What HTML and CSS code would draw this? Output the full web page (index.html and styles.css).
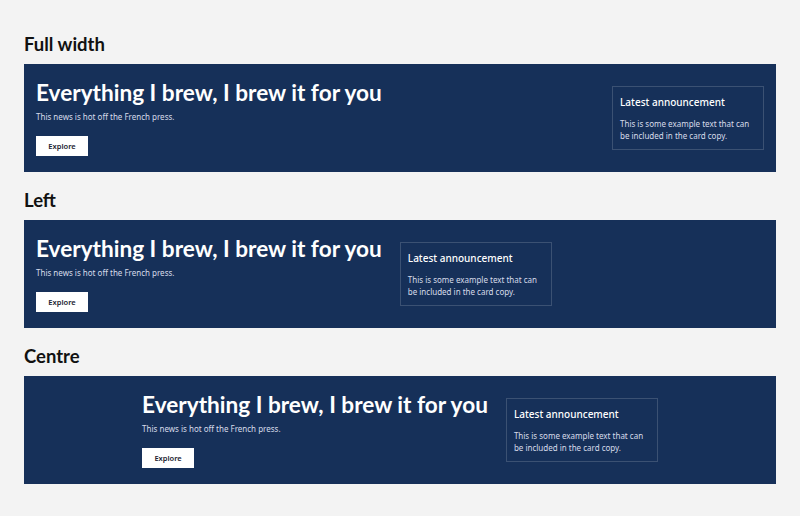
FILE: index.html
```html
<!DOCTYPE html>
<html lang="en">
<head>
<meta charset="utf-8">
<title>Hero banners</title>
<link rel="stylesheet" href="styles.css">
</head>
<body>
<main class="page">
  <section class="demo">
    <h2 class="demo-title">Full width</h2>
    <div class="hero hero-full">
      <div class="hero-main">
        <h1 class="hero-heading">Everything I brew, I brew it for you</h1>
        <p class="hero-sub">This news is hot off the French press.</p>
        <a class="hero-btn" href="#">Explore</a>
      </div>
      <div class="hero-card">
        <h3 class="card-title">Latest announcement</h3>
        <p class="card-text">This is some example text that can be included in the card copy.</p>
      </div>
    </div>
  </section>
  <section class="demo">
    <h2 class="demo-title">Left</h2>
    <div class="hero hero-left">
      <div class="hero-main">
        <h1 class="hero-heading">Everything I brew, I brew it for you</h1>
        <p class="hero-sub">This news is hot off the French press.</p>
        <a class="hero-btn" href="#">Explore</a>
      </div>
      <div class="hero-card">
        <h3 class="card-title">Latest announcement</h3>
        <p class="card-text">This is some example text that can be included in the card copy.</p>
      </div>
    </div>
  </section>
  <section class="demo">
    <h2 class="demo-title">Centre</h2>
    <div class="hero hero-centre">
      <div class="hero-main">
        <h1 class="hero-heading">Everything I brew, I brew it for you</h1>
        <p class="hero-sub">This news is hot off the French press.</p>
        <a class="hero-btn" href="#">Explore</a>
      </div>
      <div class="hero-card">
        <h3 class="card-title">Latest announcement</h3>
        <p class="card-text">This is some example text that can be included in the card copy.</p>
      </div>
    </div>
  </section>
</main>
</body>
</html>
```

FILE: styles.css
```css
html, body {
  margin: 0;
  padding: 0;
  background: #f3f3f3;
}
body {
  font-family: "Noto Sans", "Open Sans", sans-serif;
  color: #111;
}
.page {
  padding: 32px 24px 0;
  display: flex;
  flex-direction: column;
  gap: 16px;
}
.demo {
  display: flex;
  flex-direction: column;
  gap: 8px;
}
.demo-title {
  margin: 0;
  font-family: Lato, "Noto Sans", sans-serif;
  font-weight: 700;
  font-size: 18.5px;
  line-height: 24px;
  color: #111;
}
.hero {
  background: #163059;
  height: 108px;
  box-sizing: border-box;
  padding: 0 12px;
  display: flex;
  align-items: center;
  gap: 18px;
}
.hero-full { justify-content: space-between; }
.hero-left { justify-content: flex-start; }
.hero-centre { justify-content: center; }
.hero-main {
  display: flex;
  flex-direction: column;
  align-items: flex-start;
}
.hero-heading {
  margin: 0;
  font-family: Lato, "Noto Sans", sans-serif;
  font-weight: 700;
  font-size: 22.6px;
  line-height: 26px;
  color: #fff;
}
.hero-sub {
  margin: 5px 0 0;
  font-size: 8px;
  line-height: 12px;
  color: #d6dcea;
}
.hero-btn {
  margin-top: 13px;
  width: 52px;
  height: 20px;
  background: #fff;
  color: #1b2230;
  font-size: 7.5px;
  font-weight: 600;
  display: flex;
  align-items: center;
  justify-content: center;
  text-decoration: none;
}
.hero-card {
  width: 152px;
  height: 64px;
  box-sizing: border-box;
  border: 1px solid rgba(255, 255, 255, 0.16);
  padding: 8px 7px 0;
  flex-shrink: 0;
}
.card-title {
  margin: 0;
  font-size: 10px;
  font-weight: 500;
  line-height: 14px;
  color: #fff;
}
.card-text {
  margin: 9px 0 0;
  font-size: 8px;
  line-height: 12px;
  color: #d6dcea;
}
```
